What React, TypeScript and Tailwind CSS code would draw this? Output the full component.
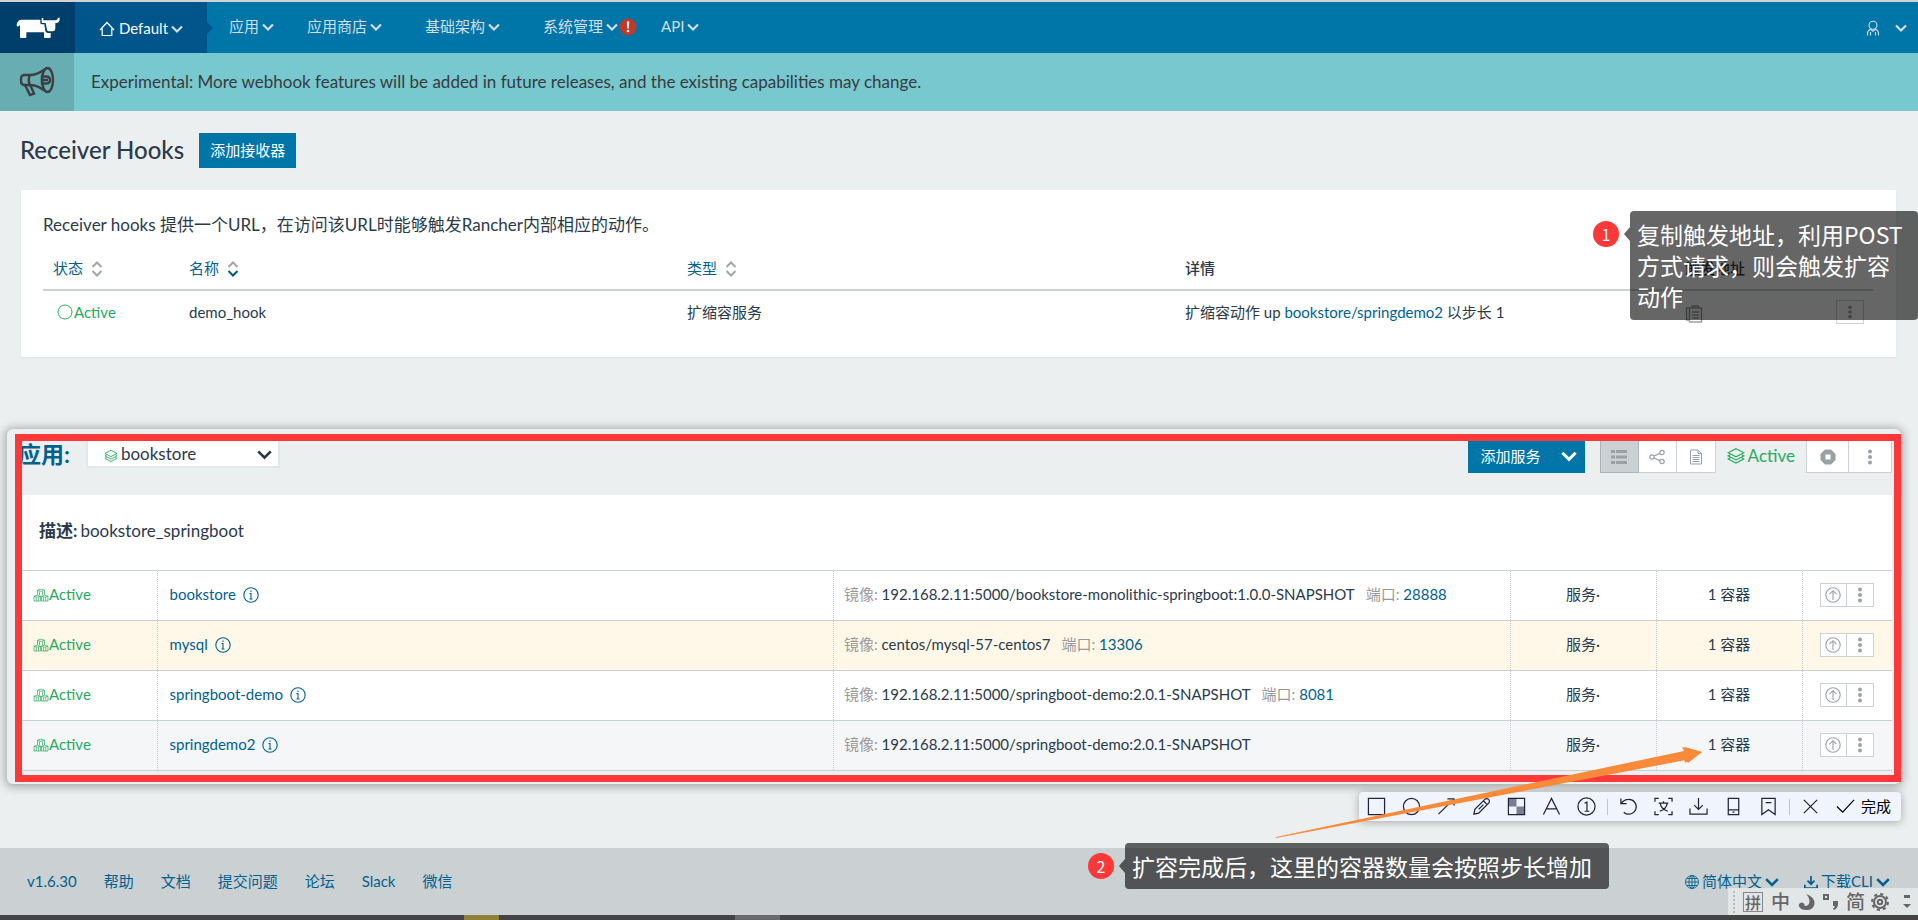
import type { ReactNode } from 'react'
import clsx from 'clsx'

interface Service {
  name: string
  image: string
  port?: string
  rowClass: string
}

const services: Service[] = [
  { name: 'bookstore', image: '192.168.2.11:5000/bookstore-monolithic-springboot:1.0.0-SNAPSHOT', port: '28888', rowClass: 'bg-white' },
  { name: 'mysql', image: 'centos/mysql-57-centos7', port: '13306', rowClass: 'bg-[#fff8e8]' },
  { name: 'springboot-demo', image: '192.168.2.11:5000/springboot-demo:2.0.1-SNAPSHOT', port: '8081', rowClass: 'bg-white' },
  { name: 'springdemo2', image: '192.168.2.11:5000/springboot-demo:2.0.1-SNAPSHOT', rowClass: 'bg-[#f4f6f8]' },
]

const navItems = [
  { label: '应用', className: 'mr-[33px]' },
  { label: '应用商店', className: 'mr-[43px]' },
  { label: '基础架构', className: 'mr-[43px]' },
  { label: '系统管理', className: 'mr-6', alert: true },
  { label: 'API', className: '' },
]

const footerLinks = ['v1.6.30', '帮助', '文档', '提交问题', '论坛', 'Slack', '微信']

interface IconProps {
  className?: string
  box?: string
  width?: number
  children: ReactNode
}

function Icon({ className, box = '0 0 16 16', width = 1, children }: IconProps) {
  return (
    <svg
      viewBox={box}
      fill="none"
      stroke="currentColor"
      strokeWidth={width}
      aria-hidden="true"
      className={clsx('shrink-0', className)}
    >
      {children}
    </svg>
  )
}

function Chevron({ className = 'w-3 h-3' }: { className?: string }) {
  return (
    <Icon box="0 0 12 12" width={2.2} className={className}>
      <path d="M1 3.5l5 5 5-5" />
    </Icon>
  )
}

function LayersIcon({ className }: { className: string }) {
  return (
    <Icon className={className}>
      <path d="M8 1.5l7 3.6-7 3.6-7-3.6z" />
      <path d="M3 6.8L1 7.9l7 3.6 7-3.6-2-1.1M3 9.6l-2 1.1 7 3.6 7-3.6-2-1.1" />
    </Icon>
  )
}

function ServiceIcon() {
  return (
    <Icon width={0.7} className="w-4 h-4">
      <path d="M4.5 8V3.2Q8 1 11.5 3.2V8M4.5 3.4Q8 5.4 11.5 3.4M6.5 4.5V8M9.5 4.5V8" />
      <path d="M1 9.2Q4.2 7 7.6 9.2V14H1zM1 9.3Q4.2 11 7.6 9.3M3.2 10.2V14M5.4 10.2V14" />
      <path d="M8.4 9.2Q11.8 7 15 9.2V14H8.4zM8.4 9.3Q11.8 11 15 9.3M10.6 10.2V14M12.8 10.2V14" />
    </Icon>
  )
}

function Dots({ className = 'w-4 h-4' }: { className?: string }) {
  return (
    <svg viewBox="0 0 16 16" fill="currentColor" aria-hidden="true" className={className}>
      <circle cx="8" cy="2.5" r="2" />
      <circle cx="8" cy="8" r="2" />
      <circle cx="8" cy="13.5" r="2" />
    </svg>
  )
}

function SortIcon({ active }: { active?: boolean }) {
  return (
    <Icon box="0 0 12 16" width={2} className="w-3 h-4">
      <path d="M1.5 6L6 1.5 10.5 6" stroke="#a0a7ac" />
      <path d="M1.5 10L6 14.5 10.5 10" stroke={active ? '#00558b' : '#a0a7ac'} />
    </Icon>
  )
}

function RancherLogo() {
  return (
    <svg viewBox="0 0 132 66" fill="#fff" aria-hidden="true" className="w-11 h-[22px]">
      <path d="M3 18Q8 8 16 8H73V18Q73 22 78 22H85L88 42Q90 48 96 48H104V60Q104 63 101 63H87Q84 63 84 60V46H31V60Q31 63 28 63H15Q12 63 12 60V24L8 28Q3 30 2 25Z" />
      <path d="M77 4Q80 1 82 4V10H118Q124 10 126 3Q130 0 131 3Q132 16 122 18H118V34Q118 43 110 43H98Q94 43 93 38L89 18H80Q77 18 77 14Z" />
    </svg>
  )
}

function TopNav() {
  return (
    <header className="flex h-[53px] border-t-2 border-[#cfd3d6] bg-[#0075a8] text-[15px] text-[#d3dde2]">
      <a href="#home" aria-label="Rancher" className="flex w-[75px] items-center justify-center bg-[#003f6b]">
        <RancherLogo />
      </a>
      <div className="relative flex w-[132px] items-center justify-center bg-[#00558b] pt-0.5">
        <button className="flex items-center text-white">
          <Icon width={1.2} className="mr-1 w-4 h-4">
            <path d="M1 9l7-7.5L15 9M3.2 7.5v7h9.6v-7" />
          </Icon>
          Default
          <Chevron className="ml-[3px] w-3 h-3 text-[#d3dde2]" />
        </button>
        <svg viewBox="0 0 6 12" aria-hidden="true" className="absolute -right-1.5 top-5 h-3 w-1.5">
          <path d="M0 0l6 6-6 6z" fill="#00558b" />
        </svg>
      </div>
      <nav className="flex flex-1 items-center pb-0.5 pl-[22px]">
        {navItems.map((item) => (
          <button key={item.label} className={clsx('flex items-center', item.className)}>
            {item.label}
            <Chevron className="ml-[3px] w-3 h-3" />
            {item.alert && (
              <svg viewBox="0 0 18 18" aria-hidden="true" className="ml-px h-[18px] w-[18px]">
                <circle cx="9" cy="9" r="8.5" fill="#c0392b" />
                <path d="M7.8 3.5h2.4l-.4 7H8.2z" fill="#fff" />
                <circle cx="9" cy="13" r="1.3" fill="#fff" />
              </svg>
            )}
          </button>
        ))}
      </nav>
      <button aria-label="Account" className="flex items-center gap-3.5 pr-[11px]">
        <Icon width={1.1} className="w-4 h-4">
          <circle cx="8" cy="5.2" r="4" />
          <path d="M2.500 15.500v-2q0-3 3-4.300l2.500 2 2.500-2q3 1.300 3 4.300v2M5.500 12v3.500M10.500 12v3.500" />
        </Icon>
        <Chevron />
      </button>
    </header>
  )
}

function Banner() {
  return (
    <div className="flex h-[58px] bg-[#78c8cf] text-[17px] text-[#373b3e]">
      <div className="flex w-[74px] items-center justify-center bg-[#68adb2] text-[#3b3f42]">
        <Icon box="0 0 36 32" width={2.4} className="h-8 w-9">
          <ellipse cx="28.500" cy="14" rx="5.500" ry="12" />
          <path d="M25.500 3.500Q18 9 11 9H5Q2 9 2 14T5 19H11Q18 19 25.500 24.500M11 9Q8.500 14 11 19" />
          <path d="M6 19l5 10 4-1.500-3.500-8" />
          <path d="M23 10.500h4q4 0 4 3.500t-4 3.500h-4zM24 14h5" />
        </Icon>
      </div>
      <p className="flex items-center pl-[17px]">
        Experimental: More webhook features will be added in future releases, and the existing capabilities may change.
      </p>
    </div>
  )
}

function HookTable() {
  const sortable = 'flex items-center gap-2 text-[#00618f]'
  return (
    <table className="mt-2.5 w-full table-fixed text-left text-[15px]">
      <colgroup>
        <col className="w-[136px]" />
        <col />
        <col />
        <col />
        <col className="w-[100px]" />
        <col className="w-[100px]" />
      </colgroup>
      <thead>
        <tr className="h-[42px] border-b-2 border-[#cbd1d5]">
          <th className="px-2.5 font-normal"><button className={sortable}>状态 <SortIcon /></button></th>
          <th className="px-2.5 font-normal"><button className={sortable}>名称 <SortIcon active /></button></th>
          <th className="px-2.5 font-normal"><button className={sortable}>类型 <SortIcon /></button></th>
          <th className="px-2.5 font-medium">详情</th>
          <th className="px-3 font-medium">触发地址</th>
          <th aria-label="操作" />
        </tr>
      </thead>
      <tbody>
        <tr className="h-[43px]">
          <td className="px-3.5">
            <span className="flex items-center text-[#27aa5e]">
              <Icon className="mr-px h-4 w-4"><circle cx="8" cy="8" r="7" /></Icon>
              Active
            </span>
          </td>
          <td className="px-2.5">demo_hook</td>
          <td className="px-2.5">扩缩容服务</td>
          <td className="px-2.5">
            扩缩容动作 up <a href="#springdemo2" className="text-[#00618f]">bookstore/springdemo2</a> 以步长 1
          </td>
          <td className="px-3">
            <button aria-label="复制" className="block pt-1 text-[#9aa1a6]">
              <Icon box="0 0 18 18" width={1.4} className="h-[18px] w-[18px]">
                <path d="M4.500 3H1.500v12h3M4.500 3h12v14h-12zM7.500 3V1h6v2M7 7h7M7 10h7M7 13h7" />
              </Icon>
            </button>
          </td>
          <td className="pr-[9px]">
            <button aria-label="更多" className="ml-auto flex h-6 w-7 items-center justify-center border border-[#cbd1d5] text-[#9aa1a6]">
              <Dots className="h-3.5 w-3.5" />
            </button>
          </td>
        </tr>
      </tbody>
    </table>
  )
}

function StackHeader() {
  const tool = 'flex h-full items-center justify-center border-b border-r border-[#cbd1d5] bg-white'
  return (
    <div className="flex h-[54px] items-start pr-0.5">
      <label htmlFor="stack" className="-ml-1 text-[23px] leading-[26px] font-bold text-[#00618f]">应用:</label>
      <div className="relative ml-4 h-[27px] w-[194px]">
        <select
          id="stack"
          defaultValue="bookstore"
          className="h-full w-full appearance-none border-2 border-t-0 border-[#e3e7e8] bg-white pl-[33px] text-[17px] leading-6"
        >
          <option value="bookstore">bookstore</option>
        </select>
        <LayersIcon className="pointer-events-none absolute left-[18px] top-2 h-3.5 w-3.5 text-[#27aa5e]" />
        <Chevron className="pointer-events-none absolute right-2 top-1.5 h-[15px] w-[15px]" />
      </div>

      <div className="ml-auto flex h-8 text-[#9aa1a6]">
        <button className="flex items-center bg-[#0075a8] pb-0.5 pl-[13px] pr-2 text-[15px] text-white">
          添加服务
          <Chevron className="ml-5 h-4 w-4" />
        </button>
        <button aria-label="列表" className="ml-[15px] flex w-[39px] items-center justify-center border-x border-b border-[#adb4b8] bg-[#cbd0d3]">
          <svg viewBox="0 0 16 16" fill="currentColor" aria-hidden="true" className="h-4 w-4">
            <path d="M0 1h4v3H0zM5 1h11v3H5zM0 6.500h4v3H0zM5 6.500h11v3H5zM0 12h4v3H0zM5 12h11v3H5z" />
          </svg>
        </button>
        <button aria-label="关系图" className={clsx(tool, 'w-[38px]')}>
          <Icon width={1.2} className="h-4 w-4">
            <circle cx="3" cy="8" r="2.200" />
            <circle cx="13" cy="3.500" r="2.200" />
            <circle cx="13" cy="12.500" r="2.200" />
            <path d="M5 7l6-2.600M5 9l6 2.600" />
          </Icon>
        </button>
        <button aria-label="配置" className={clsx(tool, 'w-[39px]')}>
          <Icon className="h-4 w-4">
            <path d="M2.500 1H10l3.500 3.500V15h-11zM10 1v3.500h3.500M4.500 6.500h7M4.500 8.500h7M4.500 10.500h7M4.500 12.500h7" />
          </Icon>
        </button>
        <span className="flex items-center gap-[3px] px-[11px] pb-0.5 text-[17px] text-[#27aa5e]">
          <LayersIcon className="h-[18px] w-[18px]" />
          Active
        </span>
        <button aria-label="停止" className={clsx(tool, 'w-[43px] border-l')}>
          <svg viewBox="0 0 16 16" aria-hidden="true" className="h-4 w-4">
            <path d="M5 .5h6L15.500 5v6L11 15.500H5L.5 11V5z" fill="currentColor" />
            <path d="M5.500 5.500h5v5h-5z" fill="#fff" />
          </svg>
        </button>
        <button aria-label="更多" className={clsx(tool, 'w-[43px]')}>
          <Dots />
        </button>
      </div>
    </div>
  )
}

function ServiceRow({ service }: { service: Service }) {
  const cell = 'border-r border-dotted border-[#c3cacf] pb-0.5'
  return (
    <tr className={clsx('h-[50px] border-y border-[#c8cfd3]', service.rowClass)}>
      <td className={clsx(cell, 'pl-[11px]')}>
        <span className="flex items-center text-[#27aa5e]">
          <ServiceIcon />
          Active
        </span>
      </td>
      <td className={clsx(cell, 'pl-3')}>
        <span className="flex items-center gap-[7px] text-[#00618f]">
          <a href={`#${service.name}`}>{service.name}</a>
          <Icon width={1.100} className="h-4 w-4">
            <circle cx="8" cy="8" r="7.200" />
            <path d="M6.500 6.500H8v5.500M6.500 12h3M8 3.500v1.500" />
          </Icon>
        </span>
      </td>
      <td className={clsx(cell, 'pl-2.5')}>
        <span className="text-[#999]">镜像: </span>
        {service.image}
        {service.port && (
          <span className="ml-[11px] text-[#999]">
            端口: <a href={`#port-${service.port}`} className="text-[#00618f]">{service.port}</a>
          </span>
        )}
      </td>
      <td className={clsx(cell, 'text-center')}>服务·</td>
      <td className={clsx(cell, 'text-center')}>1 容器</td>
      <td className="pb-0.5">
        <div className="ml-[17px] flex h-6 w-[54px] border border-[#cbd1d5] bg-white text-[#9aa1a6]">
          <button aria-label="升级" className="flex flex-1 items-center justify-center border-r border-[#cbd1d5]">
            <Icon width={1.100} className="h-4 w-4">
              <circle cx="8" cy="8" r="7.200" />
              <path d="M8 13V4M4.500 7.200L8 3.700l3.500 3.500" />
            </Icon>
          </button>
          <button aria-label="更多" className="flex flex-1 items-center justify-center">
            <Dots />
          </button>
        </div>
      </td>
    </tr>
  )
}

function StackPanel() {
  return (
    <section className="mt-[72px] mr-[17px] ml-[7px] rounded-md bg-[#ebeff0] pt-[5px] pb-0.5 pl-2 shadow-[0_1px_10px_2px_rgba(0,0,0,0.3)]">
      <div className="h-[348px] overflow-hidden border-[7px] border-[#fd3838]">
        <StackHeader />
        <div className="mr-0.5 flex h-[75px] items-center bg-white pb-1 pl-[17px] text-[17px]">
          <span className="mr-[3px] font-bold">描述:</span>
          bookstore_springboot
        </div>
        <div className="mr-0.5">
          <table className="w-full table-fixed text-[15px]">
            <colgroup>
              <col className="w-[135px]" />
              <col />
              <col />
              <col className="w-[146px]" />
              <col className="w-[146px]" />
              <col className="w-[90px]" />
            </colgroup>
            <tbody>
              {services.map((service) => (
                <ServiceRow key={service.name} service={service} />
              ))}
            </tbody>
          </table>
        </div>
      </div>
    </section>
  )
}

const tools: { label: string; icon: ReactNode }[] = [
  { label: '矩形', icon: <path d="M1.500 1.500h17v17h-17z" /> },
  { label: '椭圆', icon: <circle cx="10" cy="10" r="8.500" /> },
  { label: '箭头', icon: <path d="M1.500 18L18 2M11 2h7v7" /> },
  { label: '画笔', icon: <path d="M2 18l1-5L14 2q2-1 3.500.5T18 6L7 17zM12 4l4 4M7 13l5-5" /> },
  {
    label: '马赛克',
    icon: (
      <>
        <path d="M2 2h8v8H2zM10 10h8v8h-8z" fill="#7b7e90" stroke="none" />
        <path d="M1.500 1.500h17v17h-17z" />
      </>
    ),
  },
  { label: '文字', icon: <path d="M1.500 18.500L10 1.500l8.500 17M4.500 12.500h11" /> },
  {
    label: '序号',
    icon: (
      <>
        <circle cx="10" cy="10" r="9" />
        <path d="M8 6.500l2.500-1V15M8 15h5" />
      </>
    ),
  },
  { label: '撤销', icon: <path d="M2 1.500V7h6M2.500 7Q5 2.500 10 2.500A7.800 7.800 0 1 1 5 16" /> },
  {
    label: '翻译',
    icon: (
      <path d="M1 5V1.500h4M15 1.500h4V5M19 15v3.500h-4M5 18.500H1V15M5 6.500h10M10 4.500v2M6 15q7-2 8-8.500M6.500 7Q8 13 14.500 15" />
    ),
  },
  { label: '保存', icon: <path d="M10 1v12M5.500 8.500L10 13l4.500-4.500M1 12v6h18v-6" /> },
  { label: '钉住', icon: <path d="M4.500 1.500h11v17h-11zM4.500 13.500h11M9 16h2" /> },
  { label: '收藏', icon: <path d="M3 1.500h14v17l-7-5-7 5zM7 6h6" /> },
  { label: '取消', icon: <path d="M3 3l14 14M17 3L3 17" /> },
]

function CaptureToolbar() {
  return (
    <div className="mt-2 mr-[17px] ml-auto flex h-[29px] w-[542px] items-center rounded bg-[#f0f4fc] pr-2.5 text-[#20243a] shadow-[0_1px_8px_rgba(0,0,0,0.3)]">
      {tools.map((tool) => (
        <div key={tool.label} className="flex items-center">
          {(tool.label === '撤销' || tool.label === '取消') && <span className="mx-[3px] h-4 w-px bg-[#c0c4cc]" />}
          <button aria-label={tool.label} className="flex w-[35px] justify-center">
            <Icon box="0 0 20 20" width={1.300} className="h-[19px] w-[19px]">{tool.icon}</Icon>
          </button>
        </div>
      ))}
      <button className="ml-auto flex items-center gap-1.5 text-[15px] text-black">
        <Icon box="0 0 20 20" width={1.300} className="h-[19px] w-[19px]">
          <path d="M1 10l6 6L19 3" />
        </Icon>
        完成
      </button>
    </div>
  )
}

interface CalloutProps {
  step: number
  className: string
  boxClass: string
  children: ReactNode
}

function Callout({ step, className, boxClass, children }: CalloutProps) {
  return (
    <div className={clsx('absolute flex items-start font-[Noto_Sans_CJK_SC,sans-serif] text-white', className)}>
      <span className="mt-2.5 flex h-[26px] w-[26px] items-center justify-center rounded-full bg-[#fd3838] text-base">{step}</span>
      <svg viewBox="0 0 6 14" aria-hidden="true" className="mt-4 ml-[5px] h-3.5 w-1.5">
        <path d="M6 0v14L0 7z" fill="rgba(0,0,0,0.6)" />
      </svg>
      <p className={clsx('rounded-sm bg-black/60 px-[7px] text-[23px] leading-[31px]', boxClass)}>{children}</p>
    </div>
  )
}

function Footer() {
  return (
    <footer className="mt-[27px] flex h-[67px] items-center bg-[#cbd0d2] pr-7 pl-[27px] text-[15px] text-[#00618f]">
      <div className="flex gap-[27px]">
        {footerLinks.map((label) => (
          <a key={label} href={`#${label}`}>{label}</a>
        ))}
      </div>
      <button className="ml-auto flex items-center">
        <Icon className="mr-[3px] h-3.5 w-3.5">
          <circle cx="8" cy="8" r="7.400" />
          <ellipse cx="8" cy="8" rx="3.500" ry="7.400" />
          <path d="M8 .5v15M.5 8h15M2 4h12M2 12h12" />
        </Icon>
        简体中文
        <Chevron className="ml-[3px] h-3.5 w-3.5" />
      </button>
      <button className="ml-[25px] flex items-center">
        <Icon width={2} className="mr-[3px] h-3.5 w-3.5">
          <path d="M8 1v9M4 6.500l4 4 4-4M1 11v4h14v-4" />
        </Icon>
        下载CLI
        <Chevron className="ml-[3px] h-3.5 w-3.5" />
      </button>
    </footer>
  )
}

function InputMethodBar() {
  return (
    <div className="absolute right-0 bottom-[5px] flex h-[27px] w-[190px] items-center bg-[#e6e8e9]/90 pl-[5px] font-[Noto_Sans_CJK_SC,sans-serif] text-[19px] font-medium text-[#666]">
      <span className="mr-2 h-[22px] border-l-2 border-dotted border-[#bbb]" />
      <span className="mr-2 flex h-5 w-5 items-center justify-center border border-[#888] text-base">拼</span>
      <span>中</span>
      <svg viewBox="0 0 18 18" fill="currentColor" aria-hidden="true" className="ml-2 mr-1.5 h-[18px] w-[18px]">
        <path d="M8 1Q17 4 16.500 11 15 17.500 8 17 3 17 1 13.500 0 10 4 9.500 7 10 6.500 13 11 13 11.500 9 11.500 4 8 1z" />
      </svg>
      <Icon box="0 0 18 18" width={2} className="h-[18px] w-[18px]">
        <path d="M2 2h4v4H2z" />
        <path d="M11 8h5v3q0 4-4 6l-1-1 2-3h-2z" fill="currentColor" stroke="none" />
      </Icon>
      <span className="ml-1.5">简</span>
      <Icon box="0 0 18 18" width={2} className="ml-1.5 h-[18px] w-[18px]">
        <circle cx="9" cy="9" r="6" />
        <circle cx="9" cy="9" r="2.200" />
        <circle cx="9" cy="9" r="8" strokeDasharray="3.140 3.140" />
      </Icon>
      <svg viewBox="0 0 8 14" fill="currentColor" aria-hidden="true" className="ml-3.5 h-3.5 w-2">
        <path d="M1 0h6v3H1zM0 9h8l-4 4z" />
      </svg>
    </div>
  )
}

export default function App() {
  return (
    <div className="relative flex min-h-screen flex-col overflow-hidden bg-[#ebeff0] font-[Lato,Noto_Sans_CJK_SC,sans-serif] text-[#2b3a4a]">
      <TopNav />
      <Banner />

      <main>
        <div className="flex items-center gap-[15px] px-5 py-[22px]">
          <h1 className="pb-0.5 text-2xl leading-[33px] font-medium">Receiver Hooks</h1>
          <button className="h-[35px] bg-[#0075a8] px-[11px] text-[15px] text-white">添加接收器</button>
        </div>

        <section className="mr-[22px] ml-[21px] h-[167px] bg-white pt-[22px] pr-[23px] pl-[22px] shadow-xs">
          <p className="h-[26px] text-[17px] leading-[26px]">
            Receiver hooks 提供一个URL，在访问该URL时能够触发Rancher内部相应的动作。
          </p>
          <HookTable />
        </section>

        <StackPanel />
        <CaptureToolbar />
      </main>

      <Footer />
      <div className="flex h-[5px] bg-[#444]">
        <span className="ml-[464px] w-[35px] bg-[#8f8238]" />
        <span className="ml-[236px] w-[45px] bg-[#6a6a6a]" />
      </div>

      <InputMethodBar />
      <Callout step={1} className="top-[211px] right-0" boxClass="h-[109px] w-[288px] pt-2">
        复制触发地址，利用POST方式请求，则会触发扩容动作
      </Callout>
      <Callout step={2} className="top-[843px] right-[309px]" boxClass="h-[46px] w-[484px] pt-2">
        扩容完成后，这里的容器数量会按照步长增加
      </Callout>
      <svg viewBox="0 0 426 92" aria-hidden="true" className="pointer-events-none absolute top-[746px] right-[216px] h-[92px] w-[426px]">
        <path d="M0 91L408 8 409 1 426 6 412 17 410 14 0 92z" fill="#f88a3a" />
        <path d="M0 91L408 5 406 1 426 6 409 17 408 13z" fill="#f88a3a" />
      </svg>
    </div>
  )
}
